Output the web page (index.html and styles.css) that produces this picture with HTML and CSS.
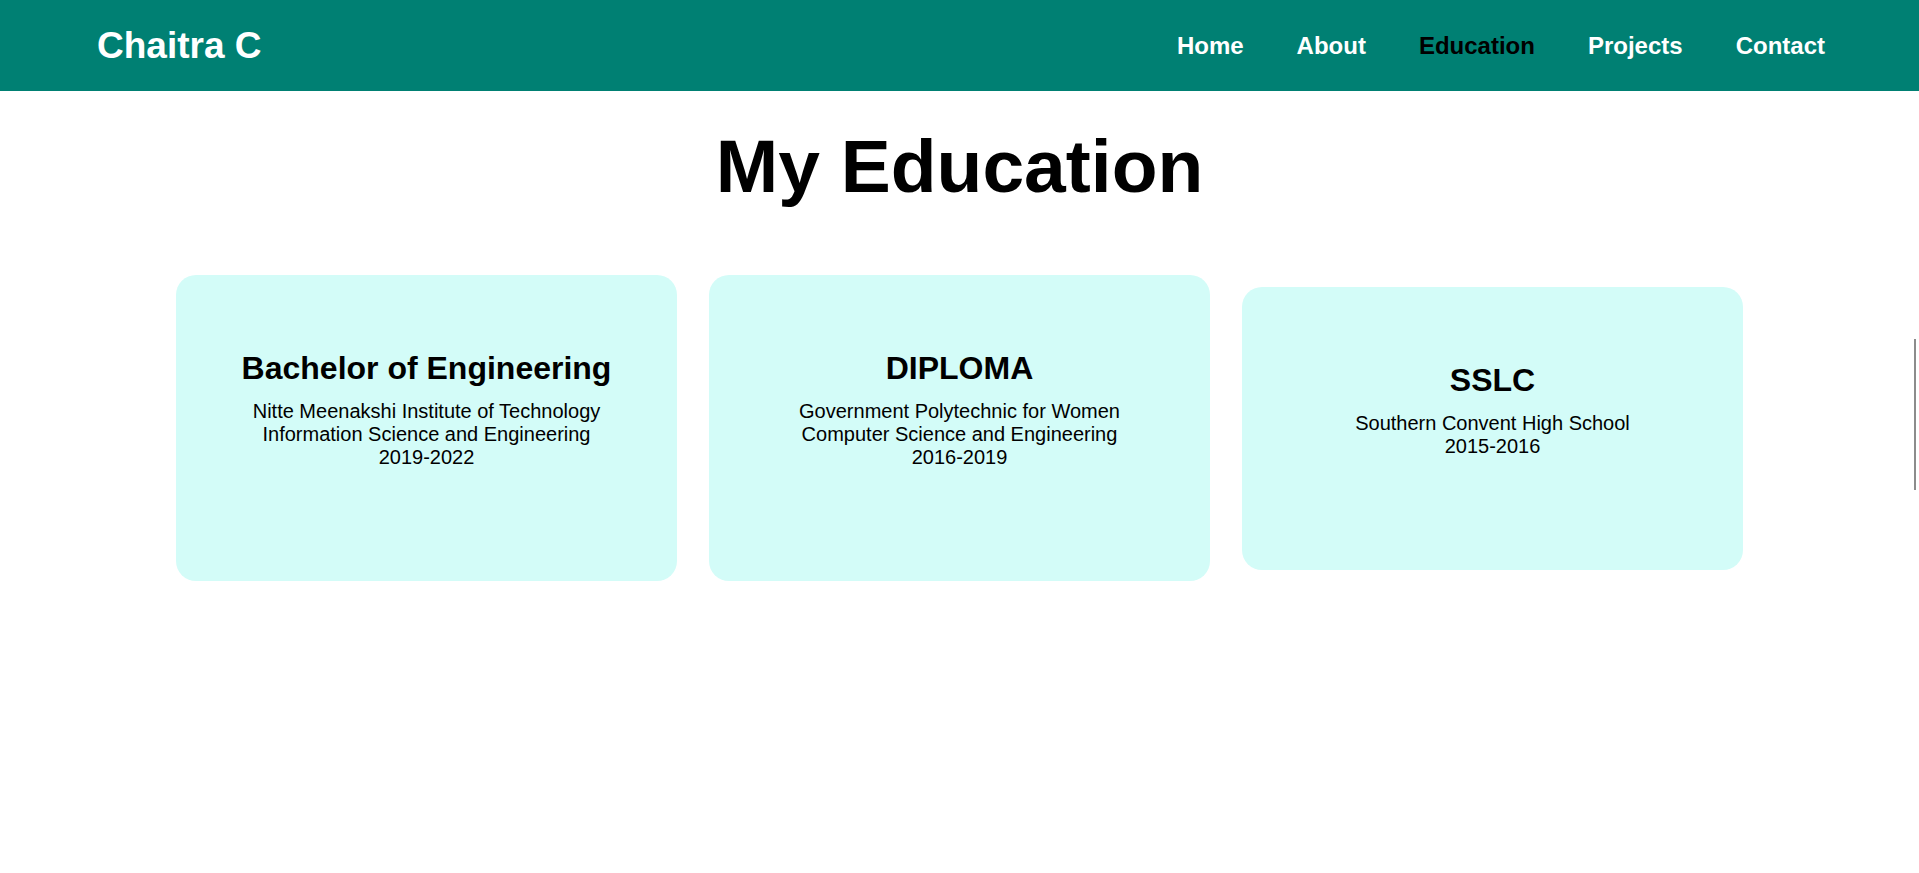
FILE: index.html
```html
<!DOCTYPE html>
<html lang="en">
<head>
<meta charset="utf-8">
<title>Chaitra C - Education</title>
<link rel="stylesheet" href="styles.css">
</head>
<body>
<header class="site-header">
  <div class="logo">Chaitra C</div>
  <nav>
    <ul class="nav-list">
      <li><a href="#" class="nav-link">Home</a></li>
      <li><a href="#" class="nav-link">About</a></li>
      <li><a href="#" class="nav-link active">Education</a></li>
      <li><a href="#" class="nav-link">Projects</a></li>
      <li><a href="#" class="nav-link">Contact</a></li>
    </ul>
  </nav>
</header>
<main class="education">
  <h1 class="section-title">My Education</h1>
  <div class="cards">
    <div class="card">
      <h2 class="card-title">Bachelor of Engineering</h2>
      <p class="card-text">Nitte Meenakshi Institute of Technology<br>Information Science and Engineering<br>2019-2022</p>
    </div>
    <div class="card">
      <h2 class="card-title">DIPLOMA</h2>
      <p class="card-text">Government Polytechnic for Women<br>Computer Science and Engineering<br>2016-2019</p>
    </div>
    <div class="card">
      <h2 class="card-title">SSLC</h2>
      <p class="card-text">Southern Convent High School<br>2015-2016</p>
    </div>
  </div>
</main>
<div class="scroll-thumb"></div>
</body>
</html>
```
FILE: styles.css
```css
* { box-sizing: border-box; }
html, body {
  margin: 0;
  padding: 0;
  background: #ffffff;
  font-family: "Liberation Sans", Arial, sans-serif;
  color: #000;
}
.site-header {
  height: 91px;
  background: #008073;
  display: flex;
  align-items: center;
  justify-content: space-between;
  padding: 0 94px 0 97px;
}
.logo {
  color: #fff;
  font-weight: 700;
  font-size: 37px;
}
.nav-list {
  list-style: none;
  margin: 0;
  padding: 0;
  display: flex;
  gap: 53px;
}
.nav-link {
  color: #fff;
  text-decoration: none;
  font-weight: 700;
  font-size: 24px;
}
.nav-link.active { color: #000; }
.education {
  display: flex;
  flex-direction: column;
  align-items: center;
}
.section-title {
  margin: 32px 0 66px;
  font-size: 75px;
  font-weight: 700;
  text-align: center;
}
.cards {
  display: flex;
  justify-content: center;
  align-items: center;
  gap: 32px;
}
.card {
  width: 501px;
  background: #d3fcf8;
  border-radius: 20px;
  padding: 75px 20px 112px;
  text-align: center;
}
.card-title {
  margin: 0 0 13px;
  font-size: 32px;
  font-weight: 700;
}
.card-text {
  margin: 0;
  font-size: 20px;
}
.scroll-thumb {
  position: fixed;
  right: 3px;
  top: 339px;
  width: 2px;
  height: 151px;
  background: #8c8c8c;
}
```
